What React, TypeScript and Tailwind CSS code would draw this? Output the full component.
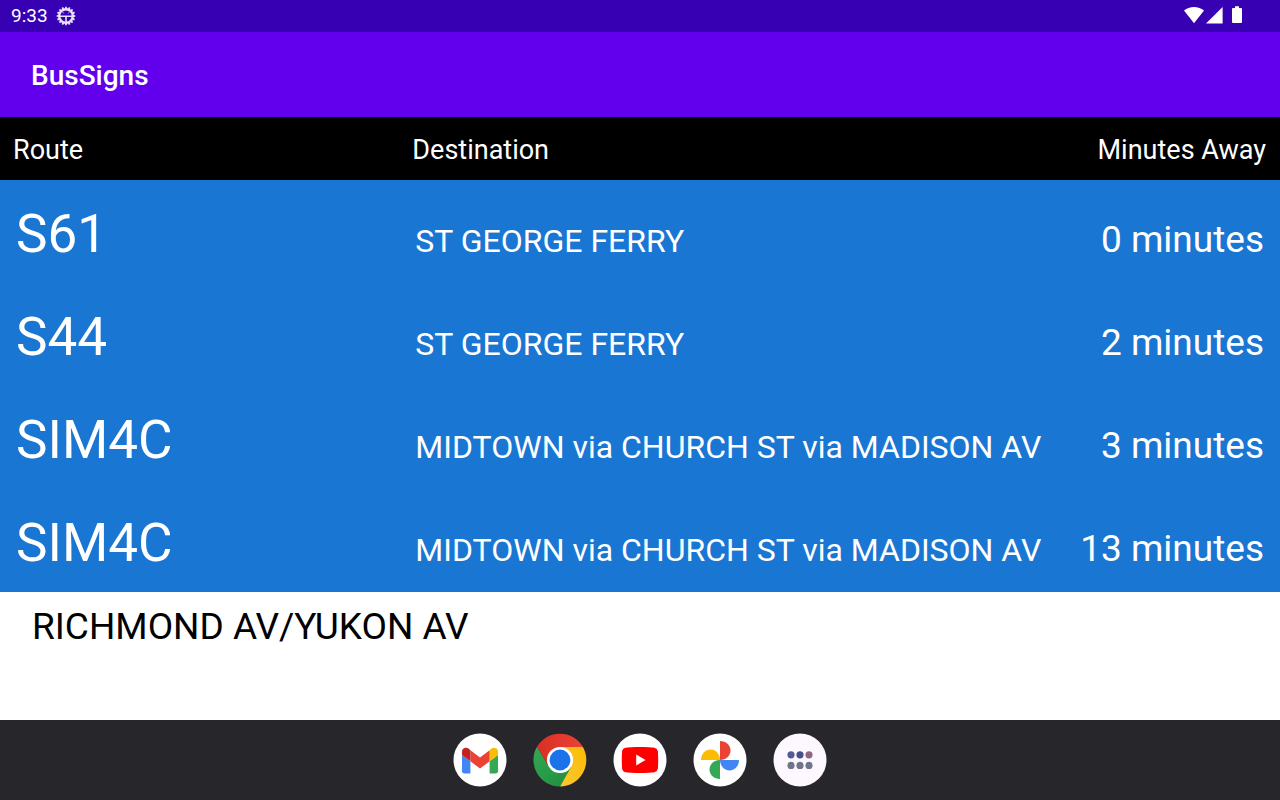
import type { ReactNode } from "react";

const arrivals = [
  { route: "S61", destination: "ST GEORGE FERRY", minutes: 0 },
  { route: "S44", destination: "ST GEORGE FERRY", minutes: 2 },
  { route: "SIM4C", destination: "MIDTOWN via CHURCH ST via MADISON AV", minutes: 3 },
  { route: "SIM4C", destination: "MIDTOWN via CHURCH ST via MADISON AV", minutes: 13 },
];

const teeth = Array.from({ length: 16 }, (_, i) => i * 22.5);

function DebugIcon() {
  return (
    <svg className="size-5" viewBox="0 0 20 20" fill="none" stroke="#e8e2f8" aria-hidden="true">
      <circle cx="10" cy="10" r="6.8" strokeWidth="2.4" />
      {teeth.map((angle) => (
        <path key={angle} d="M10 0.7V3" strokeWidth="1.8" transform={`rotate(${angle} 10 10)`} />
      ))}
      <path d="M4 10.2H16M10 10.2V16" strokeWidth="1.6" />
      <path d="M6.8 6.2L7.6 7.4M13.2 6.2L12.4 7.4" strokeWidth="0.9" />
    </svg>
  );
}

function StatusBar() {
  return (
    <header className="flex h-8 shrink-0 items-center justify-between bg-[#3700b3] pl-[11px] pr-9 text-white">
      <div className="flex items-center gap-2">
        <time className="text-[19px] leading-6">9:33</time>
        <DebugIcon />
      </div>
      <svg className="h-5 w-[60px]" viewBox="0 0 60 20" fill="#fff" role="img" aria-label="Wi-Fi, signal, battery">
        <path d="M10 17.2L0 4.6C2.8 2.2 6.2 0.9 10 0.9S17.2 2.2 20 4.6Z" />
        <path d="M22 17.6L38.6 1V17.6Z" />
        <path d="M51 0.2H55V2H57Q58 2 58 3V16Q58 17 57 17H49Q48 17 48 16V3Q48 2 49 2H51Z" />
      </svg>
    </header>
  );
}

function GmailIcon() {
  return (
    <>
      <circle cx="27" cy="27" r="26.5" fill="#fff" />
      <path d="M9 22L17.4 28.3V40.6H11.4Q9 40.6 9 38.2Z" fill="#4285f4" />
      <path d="M45 22L36.6 28.3V40.6H42.6Q45 40.6 45 38.2Z" fill="#34a853" />
      <path d="M36.6 17.2L38.5 15.6C41.2 13.5 45 15.2 45 18.6V22L36.6 28.3Z" fill="#fbbc04" />
      <path d="M17.4 17.2L27 24.4L36.6 17.2V28.3L27 35.4L17.4 28.3Z" fill="#ea4335" />
      <path d="M17.4 17.2L15.5 15.6C12.8 13.5 9 15.2 9 18.6V22L17.4 28.3Z" fill="#c5221f" />
    </>
  );
}

function ChromeIcon() {
  return (
    <>
      <defs>
        <linearGradient id="chrome-red" x1="0" y1="0" x2="1" y2="0">
          <stop offset="0" stopColor="#d93025" />
          <stop offset="1" stopColor="#ea4335" />
        </linearGradient>
        <linearGradient id="chrome-green" x1="1" y1="1" x2="0" y2="0">
          <stop offset="0" stopColor="#1e8e3e" />
          <stop offset="1" stopColor="#34a853" />
        </linearGradient>
        <linearGradient id="chrome-yellow" x1="0" y1="1" x2="1" y2="0">
          <stop offset="0" stopColor="#fcc934" />
          <stop offset="1" stopColor="#fbbc04" />
        </linearGradient>
      </defs>
      <path d="M27 27L15.7 33.5L4.1 13.6A26.5 26.5 0 0 0 27 53.5L38.3 33.5Z" fill="url(#chrome-green)" />
      <path d="M27 27L15.7 33.5L4.1 13.6A26.5 26.5 0 0 1 49.9 14H27Z" fill="url(#chrome-red)" />
      <path d="M27 14H49.9A26.5 26.5 0 0 1 27 53.5L38.3 33.5L27 27Z" fill="url(#chrome-yellow)" />
      <circle cx="27" cy="27" r="13.1" fill="#fff" />
      <circle cx="27" cy="27" r="10.4" fill="#1a73e8" />
    </>
  );
}

function YouTubeIcon() {
  return (
    <>
      <circle cx="27" cy="27" r="26.5" fill="#fff" />
      <path
        d="M27 14C34 14 39 14.3 41.5 14.8Q44.5 15.5 44.9 18.5Q45.5 27 44.9 35.5Q44.5 38.5 41.5 39.2C39 39.7 34 40 27 40S15 39.7 12.5 39.2Q9.5 38.5 9.1 35.5Q8.5 27 9.1 18.5Q9.5 15.5 12.5 14.8C15 14.3 20 14 27 14Z"
        fill="#f00"
      />
      <path d="M23.2 21.6V32.4L32.6 27Z" fill="#fff" />
    </>
  );
}

function PhotosIcon() {
  return (
    <>
      <circle cx="27" cy="27" r="26.5" fill="#fff" />
      <path d="M27 27V8C32.8 8 37.5 12.1 37.5 17.5S32.8 27 27 27Z" fill="#ea4335" />
      <path d="M27 27H46C46 32.8 41.9 37.5 36.5 37.5S27 32.8 27 27Z" fill="#4285f4" />
      <path d="M27 27V46C21.2 46 16.5 41.9 16.5 36.5S21.2 27 27 27Z" fill="#34a853" />
      <path d="M27 27H8C8 21.2 12.1 16.5 17.5 16.5S27 21.2 27 27Z" fill="#fbbc04" />
    </>
  );
}

function AllAppsIcon() {
  return (
    <>
      <circle cx="27" cy="27" r="26.5" fill="#fdf8ff" />
      <circle cx="18" cy="21.8" r="3.6" fill="#515c96" />
      <circle cx="27" cy="21.8" r="3.6" fill="#474f8b" />
      <circle cx="36" cy="21.8" r="3.6" fill="#8f6682" />
      <circle cx="18" cy="32.4" r="3.6" fill="#6f7689" />
      <circle cx="27" cy="32.4" r="3.6" fill="#6f7689" />
      <circle cx="36" cy="32.4" r="3.6" fill="#6f7689" />
    </>
  );
}

function DockButton({ label, children }: { label: string; children: ReactNode }) {
  return (
    <button type="button" aria-label={label} className="size-[54px] rounded-full">
      <svg viewBox="0 0 54 54" className="size-full" aria-hidden="true">
        {children}
      </svg>
    </button>
  );
}

export default function App() {
  return (
    <div className="flex min-h-screen flex-col bg-white font-['Roboto',sans-serif]">
      <StatusBar />
      <div className="flex h-[85px] shrink-0 items-center bg-[#6200ee] px-[31px] pt-0.5">
        <h1 className="text-[28px] leading-8 font-medium text-white">BusSigns</h1>
      </div>

      <main className="grow">
        <table className="w-full table-fixed border-collapse text-left text-white">
          <colgroup>
            <col className="w-[31.2%]" />
            <col />
            <col className="w-[18%]" />
          </colgroup>
          <thead className="bg-black text-[27px] leading-8">
            <tr className="h-[63px] align-middle">
              <th scope="col" className="px-[13px] pt-0.5 font-normal">Route</th>
              <th scope="col" className="px-[13px] pt-0.5 font-normal">Destination</th>
              <th scope="col" className="px-[14px] pt-0.5 text-right font-normal">Minutes Away</th>
            </tr>
          </thead>
          <tbody className="bg-[#1976d2]">
            {arrivals.map((bus, i) => (
              <tr key={i} className="h-[103px] align-baseline whitespace-nowrap">
                <td className="px-4 pt-5 text-[53px] leading-[68px]">{bus.route}</td>
                <td className="px-4 text-[32px] leading-10">{bus.destination}</td>
                <td className="px-4 text-right text-[37px] leading-12">{bus.minutes} minutes</td>
              </tr>
            ))}
          </tbody>
        </table>
        <p className="px-8 pt-[11px] text-[37px] leading-12 text-black">RICHMOND AV/YUKON AV</p>
      </main>

      <nav aria-label="Dock" className="flex h-20 shrink-0 items-center justify-center gap-[26px] bg-[#27262b]">
        <DockButton label="Gmail"><GmailIcon /></DockButton>
        <DockButton label="Chrome"><ChromeIcon /></DockButton>
        <DockButton label="YouTube"><YouTubeIcon /></DockButton>
        <DockButton label="Photos"><PhotosIcon /></DockButton>
        <DockButton label="All apps"><AllAppsIcon /></DockButton>
      </nav>
    </div>
  );
}
